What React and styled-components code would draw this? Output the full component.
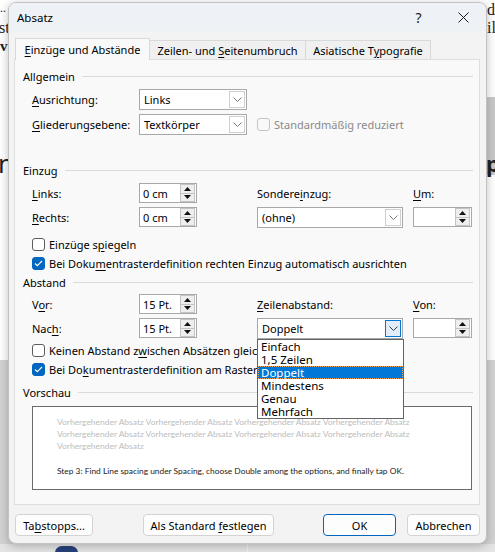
import React from 'react';
import styled, { createGlobalStyle, css } from 'styled-components';

const UI = `"Noto Sans", "Open Sans", sans-serif`;

const Global = createGlobalStyle`
  html, body { margin: 0; padding: 0; }
  body { width: 495px; height: 552px; overflow: hidden; background: #fff; font-family: ${UI}; }
  * { box-sizing: border-box; }
`;

const Page = styled.div`
  position: relative;
  width: 495px;
  height: 552px;
  overflow: hidden;
  padding: 2px 0 0 8px;
  background:
    linear-gradient(to bottom, #ffffff 0 360px, #d3d3d3 360px 544px, #e4e4e4 544px) left / 50% 100% no-repeat,
    linear-gradient(to bottom, #ffffff 0 97px, #c9c9c9 97px 175px, #ffffff 175px 360px, #d3d3d3 360px 544px, #e4e4e4 544px) right / 50% 100% no-repeat;
`;

const Backdrop = styled.div`
  position: absolute;
  inset: 0;
  font-family: "Liberation Serif", serif;
  color: #222;
`;

const Frag = styled.span`
  position: absolute;
  line-height: 1;
  white-space: nowrap;
  font-size: ${p => p.$size || 15}px;
  font-weight: ${p => (p.$bold ? 700 : 400)};
  font-family: ${p => (p.$sans ? UI : 'inherit')};
`;

const Badge = styled.div`
  position: absolute;
  left: 55px;
  top: 546px;
  width: 23px;
  height: 14px;
  border-radius: 7px;
  background: #27407a;
`;

const Dialog = styled.div`
  position: relative;
  z-index: 1;
  width: 479px;
  height: 542px;
  border: 1px solid #c2c2c2;
  border-radius: 8px;
  background: #f3f3f3;
  overflow: hidden;
  display: flex;
  flex-direction: column;
  box-shadow: 0 2px 10px rgba(0, 0, 0, 0.25);
  font-family: ${UI};
  font-size: 11px;
  color: #000;
`;

const TitleBar = styled.div`
  height: 28px;
  flex: none;
  display: flex;
  align-items: center;
  background: #eef2f7;
  padding-left: 8px;
`;

const Title = styled.div`
  flex: 1;
  font-size: 11.5px;
`;

const TitleBtn = styled.div`
  width: 45px;
  height: 28px;
  display: flex;
  align-items: center;
  justify-content: center;
  font-size: 14px;
  color: #1a1a1a;
`;

const Body = styled.div`
  flex: 1;
  display: flex;
  flex-direction: column;
  padding: 7px 6px 0 5px;
`;

const TabStrip = styled.div`
  height: 21px;
  display: flex;
  align-items: flex-end;
  padding-left: 1px;
`;

const Tab = styled.div`
  height: ${p => (p.$active ? 22 : 19)}px;
  width: ${p => p.$w}px;
  display: flex;
  align-items: center;
  justify-content: center;
  border: 1px solid #d9d9d9;
  border-bottom: none;
  background: ${p => (p.$active ? '#f9f9f9' : '#f0f0f0')};
  margin-bottom: ${p => (p.$active ? -1 : 0)}px;
  position: relative;
  z-index: ${p => (p.$active ? 2 : 1)};
  white-space: nowrap;
  ${p => !p.$active && css`margin-left: -1px;`}
`;

const Panel = styled.div`
  height: 446px;
  border: 1px solid #dedede;
  background: #f9f9f9;
  padding: 8px 6px 0 8px;
  display: flex;
  flex-direction: column;
`;

const GroupHeader = styled.div`
  height: 16px;
  margin-top: ${p => p.$mt || 0}px;
  display: flex;
  align-items: center;
  gap: 7px;
  &::after {
    content: '';
    flex: 1;
    height: 1px;
    background: #dadada;
  }
`;

const FormGrid = styled.div`
  margin: ${p => p.$mt}px 0 0 9px;
  display: grid;
  grid-template-columns: 107px 118px 156px 59px;
  grid-auto-rows: ${p => p.$row}px;
  row-gap: 4px;
  align-items: center;
`;

const Label = styled.div`
  white-space: nowrap;
  color: ${p => (p.$disabled ? '#8a8a8a' : '#000')};
`;

const Key = styled.span`
  text-decoration: underline;
  text-underline-offset: 2px;
  text-decoration-thickness: 1px;
`;

const SelectBox = styled.div`
  position: relative;
  width: ${p => p.$w}px;
  height: 21px;
  border: 1px solid #a8a8a8;
  background: #fff;
  display: flex;
  align-items: stretch;
`;

const SelectText = styled.div`
  flex: 1;
  padding-left: 4px;
  display: flex;
  align-items: center;
  white-space: nowrap;
`;

const SelectBtn = styled.div`
  width: 16px;
  margin: 1px;
  border: 1px solid ${p => (p.$focus ? '#0078d4' : '#cfcfcf')};
  background: ${p => (p.$focus ? '#e1eefa' : '#fff')};
  display: flex;
  align-items: center;
  justify-content: center;
`;

const SpinBox = styled.div`
  width: ${p => p.$w}px;
  height: 20px;
  border: 1px solid #a8a8a8;
  background: #fff;
  display: flex;
`;

const SpinText = styled.div`
  flex: 1;
  padding-left: 3px;
  display: flex;
  align-items: center;
  white-space: nowrap;
`;

const SpinBtns = styled.div`
  width: 15px;
  margin: 0 1px 0 0;
  display: flex;
  flex-direction: column;
`;

const SpinBtn = styled.div`
  flex: 1;
  border: 1px solid #c3c3c3;
  background: #eeeeee;
  display: flex;
  align-items: center;
  justify-content: center;
  & + & { border-top: none; }
`;

const CheckRow = styled.div`
  height: 19px;
  margin: ${p => p.$mt || 0}px 0 0 ${p => (p.$inline ? 0 : 9)}px;
  display: flex;
  align-items: center;
  gap: 4px;
  white-space: nowrap;
  grid-column: ${p => p.$col || 'auto'};
  color: ${p => (p.$disabled ? '#8a8a8a' : '#000')};
`;

const Box = styled.div`
  width: 13px;
  height: 13px;
  flex: none;
  border-radius: 3px;
  display: flex;
  align-items: center;
  justify-content: center;
  ${p =>
    p.$checked
      ? css`background: #0067c0; border: 1px solid #0067c0;`
      : p.$disabled
      ? css`background: #f9f9f9; border: 1px solid #c4c4c4;`
      : css`background: #fff; border: 1px solid #5c5c5c;`}
`;

const DropWrap = styled.div`
  position: relative;
  grid-column: 3;
`;

const DropList = styled.div`
  position: absolute;
  left: 0;
  top: 21px;
  width: 147px;
  border: 1px solid #646464;
  background: #fff;
  z-index: 5;
`;

const DropItem = styled.div`
  height: 13px;
  line-height: 13px;
  padding-left: 3px;
  font-size: 11.5px;
  white-space: nowrap;
  ${p =>
    p.$sel &&
    css`
      background: #0078d7;
      color: #fff;
      outline: 1px dotted #f2a150;
      outline-offset: -1px;
    `}
`;

const Preview = styled.div`
  margin: 6px 0 0 9px;
  width: 440px;
  height: 84px;
  border: 1px solid #6a6a6a;
  background: #fff;
  padding: 9px 0 0 24px;
  font-family: Lato, "Noto Sans", sans-serif;
  font-size: 8.45px;
`;

const PrevLine = styled.div`
  height: 12px;
  line-height: 12px;
  white-space: nowrap;
  color: ${p => (p.$dark ? '#222' : '#bdbdbd')};
  margin-top: ${p => p.$mt || 0}px;
  font-size: ${p => (p.$dark ? '8.4px' : 'inherit')};
`;

const Footer = styled.div`
  display: flex;
  align-items: center;
  padding: 9px 0 0 1px;
`;

const Button = styled.div`
  height: 22px;
  width: ${p => p.$w}px;
  margin-left: ${p => (p.$auto ? 'auto' : `${p.$ml || 0}px`)};
  border: 1px solid ${p => (p.$primary ? '#0067c0' : '#d3d3d3')};
  border-radius: 4px;
  background: #fdfdfd;
  display: flex;
  align-items: center;
  justify-content: center;
  white-space: nowrap;
`;

const Chevron = ({ dark }) => (
  <svg width="9" height="5" viewBox="0 0 9 5">
    <polyline points="0.5,0.5 4.5,4.5 8.5,0.5" fill="none" stroke={dark ? '#3a3a3a' : '#777'} strokeWidth="1" />
  </svg>
);

const Tri = ({ up }) => (
  <svg width="7" height="4" viewBox="0 0 7 4">
    <polygon points={up ? '0,4 7,4 3.5,0' : '0,0 7,0 3.5,4'} fill="#111" />
  </svg>
);

const Select = ({ w, value, focus }) => (
  <SelectBox $w={w}>
    <SelectText>{value}</SelectText>
    <SelectBtn $focus={focus}>
      <Chevron dark={focus} />
    </SelectBtn>
  </SelectBox>
);

const Spin = ({ w, value }) => (
  <SpinBox $w={w}>
    <SpinText>{value}</SpinText>
    <SpinBtns>
      <SpinBtn><Tri up /></SpinBtn>
      <SpinBtn><Tri /></SpinBtn>
    </SpinBtns>
  </SpinBox>
);

const Check = ({ checked, disabled, children, ...rest }) => (
  <CheckRow $disabled={disabled} {...rest}>
    <Box $checked={checked} $disabled={disabled}>
      {checked && (
        <svg width="9" height="7" viewBox="0 0 9 7">
          <polyline points="1,3.5 3.3,5.7 8,1" fill="none" stroke="#fff" strokeWidth="1.1" />
        </svg>
      )}
    </Box>
    <span>{children}</span>
  </CheckRow>
);

const spacingOptions = ['Einfach', '1,5 Zeilen', 'Doppelt', 'Mindestens', 'Genau', 'Mehrfach'];
const prevText = 'Vorhergehender Absatz Vorhergehender Absatz Vorhergehender Absatz Vorhergehender Absatz';

export default function App() {
  return (
    <>
      <Global />
      <Page>
        <Backdrop>
          <Frag style={{ left: 0, top: 2 }} $size={12}>..</Frag>
          <Frag style={{ left: -1, top: 20 }} $size={16}>st</Frag>
          <Frag style={{ left: 0, top: 39 }} $size={15} $bold>v</Frag>
          <Frag style={{ left: -2, top: 150 }} $size={26} $sans>n</Frag>
          <Frag style={{ left: 487, top: 2 }} $size={16}>d.</Frag>
          <Frag style={{ left: 487, top: 20 }} $size={16}>il</Frag>
          <Frag style={{ left: 486, top: 152 }} $size={22} $sans $bold>p</Frag>
          <Badge />
        </Backdrop>
        <Dialog>
          <TitleBar>
            <Title>Absatz</Title>
            <TitleBtn>?</TitleBtn>
            <TitleBtn>
              <svg width="11" height="11" viewBox="0 0 11 11">
                <path d="M0.5 0.5 L10.5 10.5 M10.5 0.5 L0.5 10.5" stroke="#1a1a1a" strokeWidth="1" />
              </svg>
            </TitleBtn>
          </TitleBar>
          <Body>
            <TabStrip>
              <Tab $active $w={135}><span><Key>E</Key>inzüge und Abstände</span></Tab>
              <Tab $w={157}><span>Zeilen- und <Key>S</Key>eitenumbruch</span></Tab>
              <Tab $w={126}><span>Asiatische T<Key>y</Key>pografie</span></Tab>
            </TabStrip>
            <Panel>
              <GroupHeader>Allgemein</GroupHeader>
              <FormGrid $mt={5} $row={21}>
                <Label><Key>A</Key>usrichtung:</Label>
                <Select w={108} value="Links" />
                <div />
                <div />
                <Label><Key>G</Key>liederungsebene:</Label>
                <Select w={108} value="Textkörper" />
                <Check disabled $inline $col="3 / span 2">Standardmäßig reduziert</Check>
              </FormGrid>

              <GroupHeader $mt={27}>Einzug</GroupHeader>
              <FormGrid $mt={5} $row={20}>
                <Label><Key>L</Key>inks:</Label>
                <Spin w={58} value="0 cm" />
                <Label>Sondere<Key>i</Key>nzug:</Label>
                <Label><Key>U</Key>m:</Label>
                <Label><Key>R</Key>echts:</Label>
                <Spin w={58} value="0 cm" />
                <Select w={146} value="(ohne)" />
                <Spin w={59} value="" />
              </FormGrid>
              <Check $mt={8}>Einzüge s<Key>p</Key>iegeln</Check>
              <Check checked>Bei Doku<Key>m</Key>entrasterdefinition rechten Einzug automatisch ausrichten</Check>

              <GroupHeader $mt={1}>Abstand</GroupHeader>
              <FormGrid $mt={4} $row={20}>
                <Label>V<Key>o</Key>r:</Label>
                <Spin w={58} value="15 Pt." />
                <Label><Key>Z</Key>eilenabstand:</Label>
                <Label><Key>V</Key>on:</Label>
                <Label>Nac<Key>h</Key>:</Label>
                <Spin w={58} value="15 Pt." />
                <DropWrap>
                  <Select w={146} value="Doppelt" focus />
                  <DropList>
                    {spacingOptions.map(o => (
                      <DropItem key={o} $sel={o === 'Doppelt'}>{o}</DropItem>
                    ))}
                  </DropList>
                </DropWrap>
                <Spin w={59} value="" />
              </FormGrid>
              <Check $mt={3}>Keinen Abstand z<Key>w</Key>ischen Absätzen gleichen Formats</Check>
              <Check checked>Bei Do<Key>k</Key>umentrasterdefinition am Raster ausrichten</Check>

              <GroupHeader $mt={5}>Vorschau</GroupHeader>
              <Preview>
                <PrevLine>{prevText}</PrevLine>
                <PrevLine>{prevText}</PrevLine>
                <PrevLine>Vorhergehender Absatz</PrevLine>
                <PrevLine $dark $mt={13}>
                  Step 3: Find Line spacing under Spacing, choose Double among the options, and finally tap OK.
                </PrevLine>
              </Preview>
            </Panel>
            <Footer>
              <Button $w={78}><span>Ta<Key>b</Key>stopps...</span></Button>
              <Button $w={131} $ml={50}><span>Als Standard <Key>f</Key>estlegen</span></Button>
              <Button $w={73} $auto $primary>OK</Button>
              <Button $w={73} $ml={11}>Abbrechen</Button>
            </Footer>
          </Body>
        </Dialog>
      </Page>
    </>
  );
}
